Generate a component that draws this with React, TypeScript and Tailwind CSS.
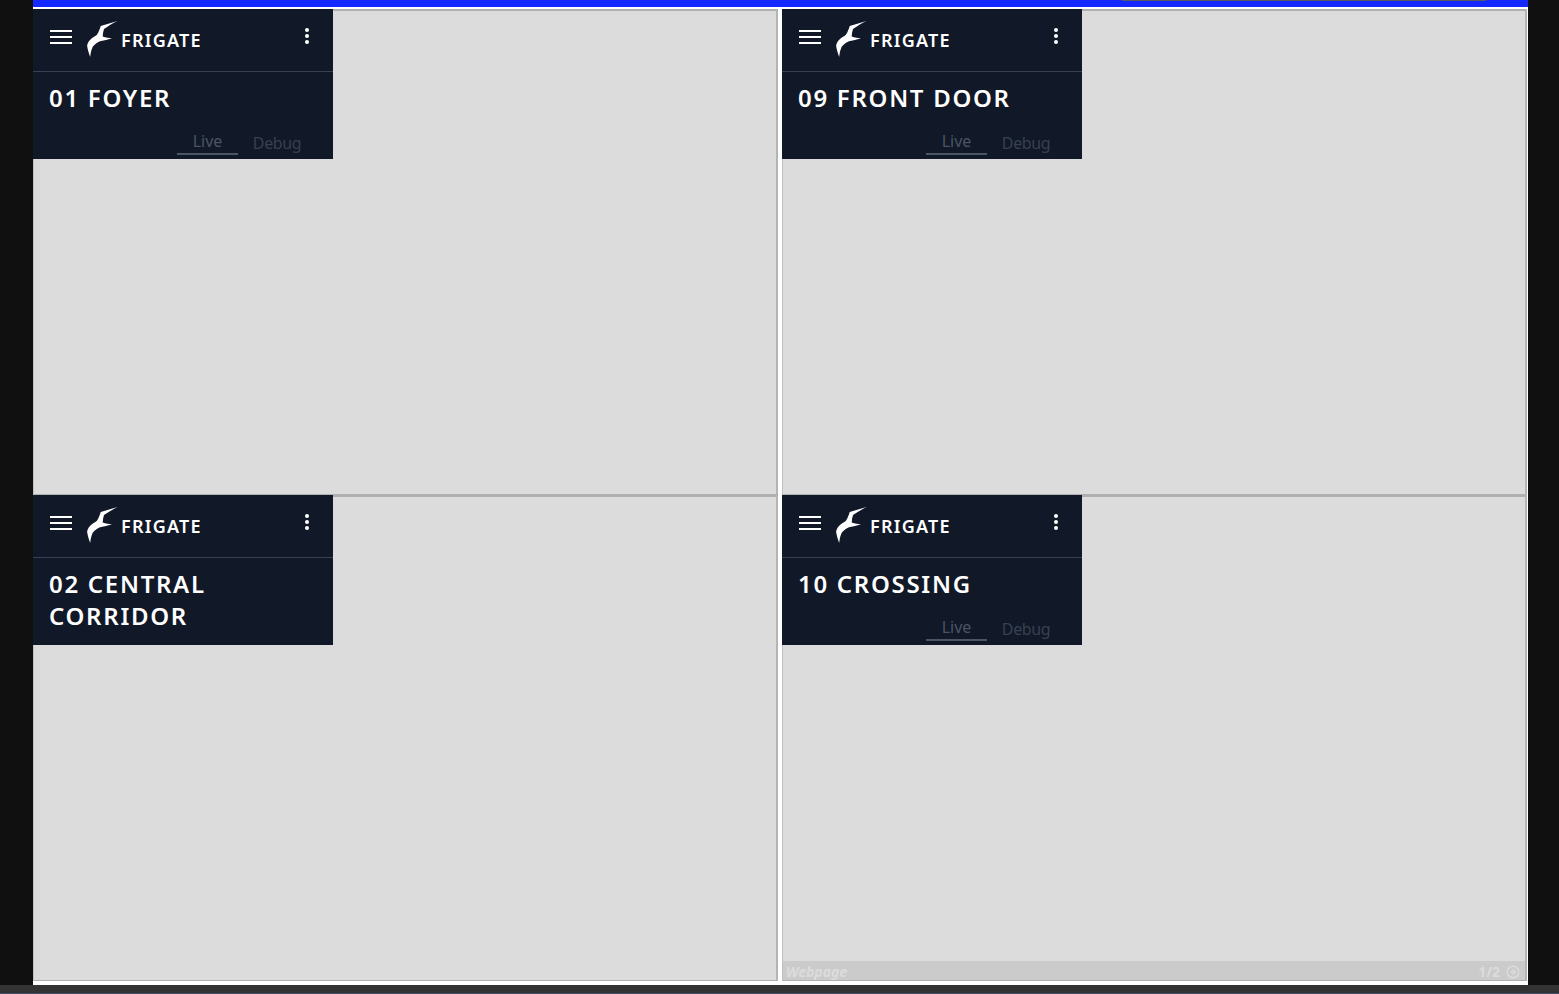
import React from "react";
import { ArrowRightCircle } from "lucide-react";

const cameras = [
  { id: 1, title: "01 FOYER", tabs: true },
  { id: 2, title: "09 FRONT DOOR", tabs: true },
  { id: 3, title: "02 CENTRAL CORRIDOR", tabs: false },
  { id: 4, title: "10 CROSSING", tabs: true, footer: true },
];

function BirdLogo() {
  return (
    <svg viewBox="0 0 34 38" className="h-[38px] w-[34px] shrink-0">
      <path
        fill="#ffffff"
        d="M32.5 1 L15.7 6 C15.4 7.5 14.9 8.8 14.3 10 C13.6 12 12.8 13.6 11.7 15 C9.4 16.6 7 18 5 20 C3.4 21.8 2.4 23.6 2.1 25.7 C2.6 29.5 3.9 33.2 5.2 37 C5.5 33.5 6.2 30 7.7 26.7 C9.8 24.4 12.2 22.4 15 21.3 C19 20.6 23 19.6 27 18.2 C24 18.2 20.8 17.6 17.7 16.6 C17.8 14 18.2 11.4 19 9 C23 6.2 27.6 3.4 32.5 1 Z"
      />
    </svg>
  );
}

function Menu() {
  return (
    <div className="flex w-[22px] flex-col gap-[4px]">
      <div className="h-[2px] bg-white" />
      <div className="h-[2px] bg-white" />
      <div className="h-[2px] bg-white" />
    </div>
  );
}

function Dots() {
  return (
    <div className="flex flex-col gap-[2px]">
      <div className="h-[4px] w-[4px] rounded-full bg-white" />
      <div className="h-[4px] w-[4px] rounded-full bg-white" />
      <div className="h-[4px] w-[4px] rounded-full bg-white" />
    </div>
  );
}

function CameraCard({ title, tabs }: { title: string; tabs: boolean }) {
  return (
    <div className="relative w-[300px] bg-[#111827] text-white">
      <div className="flex h-[63px] items-center border-b border-[#374151] pl-[17px] pr-[24px]">
        <div className="mb-[6px]">
          <Menu />
        </div>
        <div className="mb-[2px] ml-[13px]">
          <BirdLogo />
        </div>
        <span className="ml-[2px] text-[18px] leading-none font-semibold tracking-[1.25px]">FRIGATE</span>
        <div className="mb-[8px] ml-auto">
          <Dots />
        </div>
      </div>
      <div className="px-[16px] pt-[10px] text-[24px] leading-[32px] font-semibold tracking-[1.7px]">{title}</div>
      {tabs ? (
        <div className="mt-[16px] flex h-[29px] pl-[144px] text-[16px] leading-none">
          <div className="flex h-[25px] w-[61px] justify-center border-b-2 border-[#4b5563] pt-[3px] text-[#4b5563]">Live</div>
          <div className="flex w-[78px] justify-center pt-[5px] tracking-[-0.4px] text-[#374151]">Debug</div>
        </div>
      ) : (
        <div className="h-[13px]" />
      )}
    </div>
  );
}

export default function App() {
  return (
    <div className="flex h-[994px] w-[1559px] flex-col overflow-hidden bg-[#101010] font-['Noto_Sans',sans-serif]">
      <div className="ml-[33px] mr-[31px] flex h-[985px] flex-col bg-white pb-[4px]">
        <div className="flex h-[7px] shrink-0 justify-end bg-[#1428ff] pr-[42px]">
          <div className="h-[1px] w-[364px] bg-[#55565f]" />
        </div>
        <div className="mt-[2px] grid flex-1 grid-cols-[745px_745px] grid-rows-[486px_486px] gap-x-[4px]">
          {cameras.map((c) => (
            <div
              key={c.id}
              className="relative bg-[#dcdcdc] shadow-[inset_1px_0_0_#c0c0c0,inset_-2px_0_0_#b4b4b4,inset_0_2px_0_#b0b0b0,inset_0_-1px_0_#b0b0b0]"
            >
              <CameraCard title={c.title} tabs={c.tabs} />
              {c.footer && (
                <div className="absolute bottom-[1px] left-[1px] right-[2px] flex h-[19px] items-center justify-between bg-[#cbcbcb] pl-[3px] pr-[5px] pt-[2px] text-[14px] font-bold text-[#dcdcdc]">
                  <span className="italic">Webpage</span>
                  <span className="flex items-center gap-[6px]">
                    1/2
                    <ArrowRightCircle size={14} strokeWidth={2.5} />
                  </span>
                </div>
              )}
            </div>
          ))}
        </div>
      </div>
      <div className="flex-1 border-b border-[#3f4a6b] bg-[#333333]" />
    </div>
  );
}
